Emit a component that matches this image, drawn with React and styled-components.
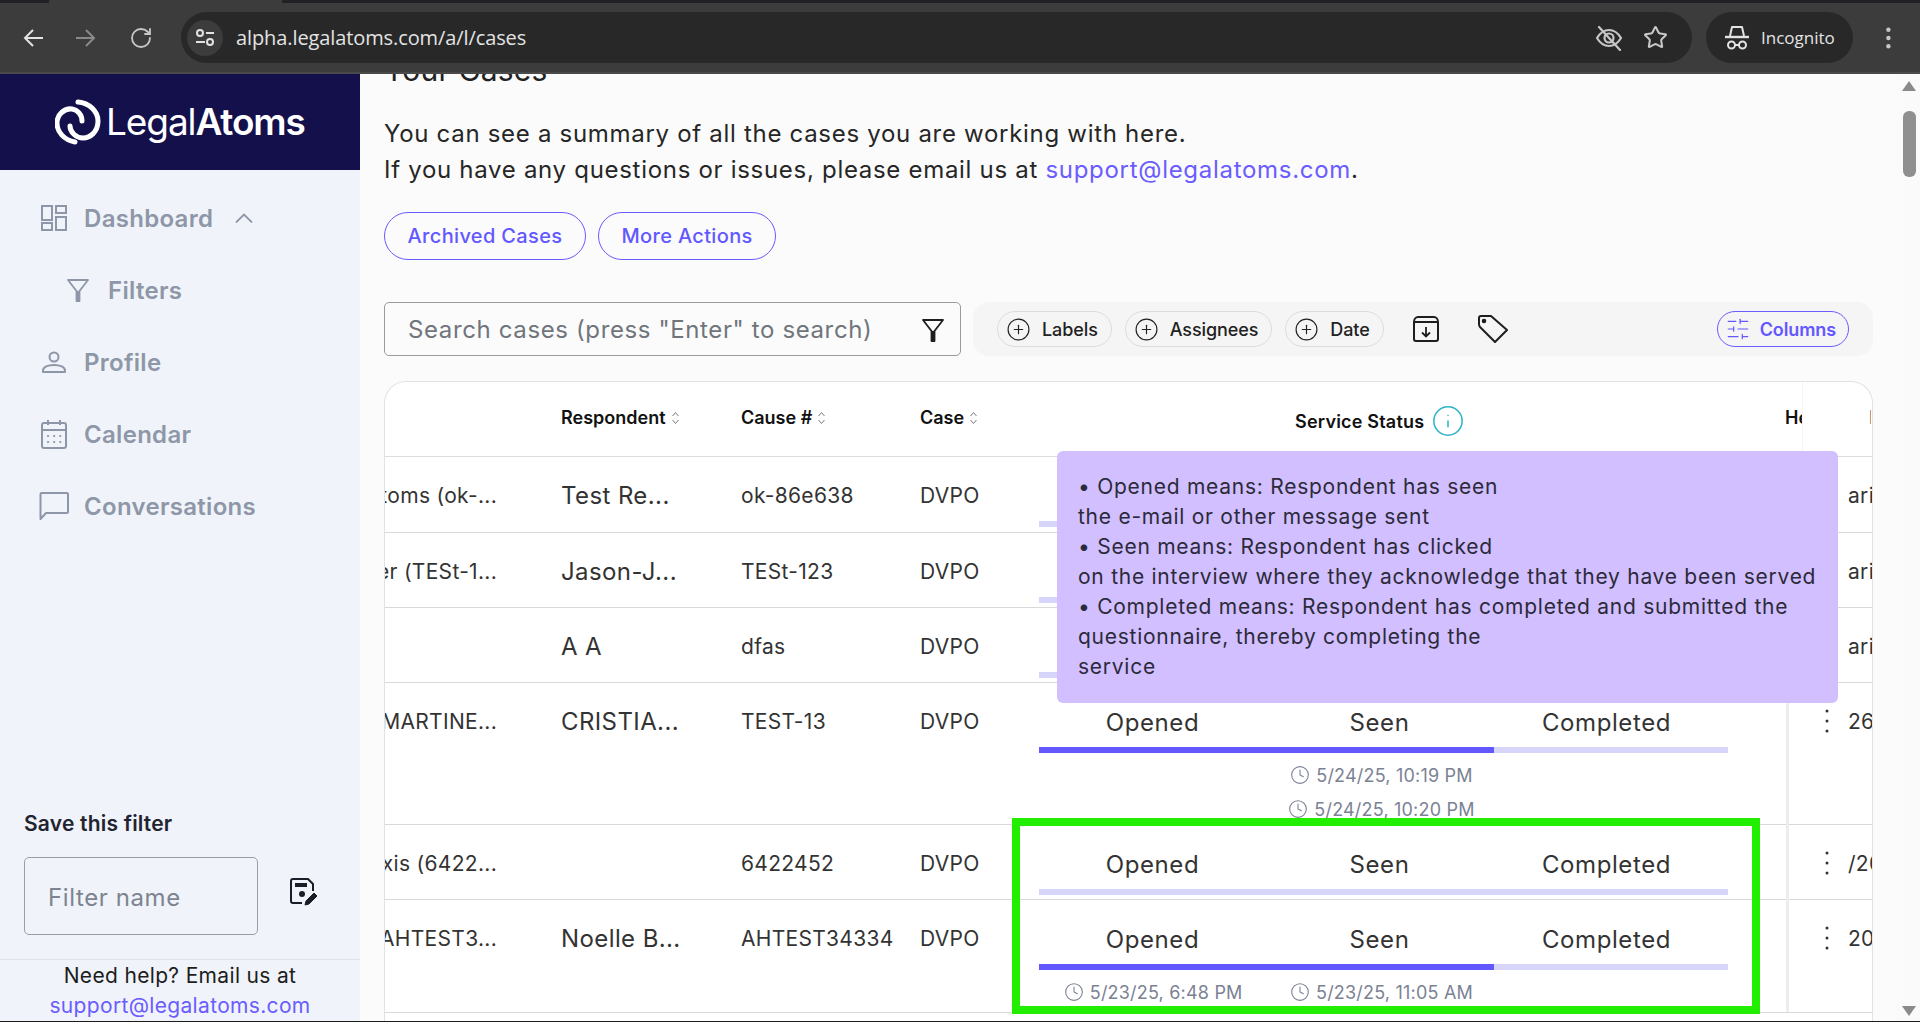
import React from 'react';
import styled, { createGlobalStyle } from 'styled-components';
import { RotateCw, Star, Clock, Info, CirclePlus, SlidersHorizontal } from 'lucide-react';

const GlobalStyle = createGlobalStyle`
  html, body {
    margin: 0;
    padding: 0;
    background: #fbfbfb;
    overflow: hidden;
  }
  * {
    box-sizing: border-box;
  }
`;

const Page = styled.div`
  width: 1920px;
  height: 1022px;
  display: flex;
  flex-direction: column;
  font-family: Inter, 'Liberation Sans', sans-serif;
  color: #2b2b2b;
  border-bottom: 1px solid #1c1c1c;
  overflow: hidden;
`;

/* browser frame */
const TabStrip = styled.div`
  height: 3px;
  background: #202124;
  padding-left: 49px;
  flex-shrink: 0;
`;

const TabEdge = styled.div`
  width: 233px;
  height: 3px;
  background: #3c3c3c;
`;

const Toolbar = styled.div`
  height: 71px;
  flex-shrink: 0;
  background: #3c3c3c;
  border-bottom: 2px solid #4a4a4a;
  display: flex;
  align-items: center;
  padding-left: 23px;
  font-family: 'Open Sans', 'Noto Sans', sans-serif;
  color: #e3e3e3;
`;

const NavIcons = styled.div`
  display: flex;
  align-items: center;
  gap: 33px;
  width: 158px;
  flex-shrink: 0;
`;

const Omnibox = styled.div`
  width: 1511px;
  height: 51px;
  background: #282828;
  border-radius: 26px;
  display: flex;
  align-items: center;
  padding: 0 24px 0 6px;
`;

const SiteButton = styled.div`
  width: 36px;
  height: 36px;
  border-radius: 50%;
  background: #3c3c3c;
  display: flex;
  align-items: center;
  justify-content: center;
  margin-right: 13px;
`;

const UrlText = styled.span`
  font-size: 20px;
  letter-spacing: -0.1px;
  flex: 1;
`;

const OmniIcons = styled.div`
  display: flex;
  align-items: center;
  gap: 20px;
`;

const IncognitoPill = styled.div`
  margin-left: 14px;
  width: 147px;
  height: 51px;
  background: #282828;
  border-radius: 26px;
  display: flex;
  align-items: center;
  gap: 12px;
  padding-left: 19px;
  font-size: 17px;
`;

const MenuDots = styled.div`
  margin-left: 31px;
  display: flex;
`;

/* app */
const Body = styled.div`
  flex: 1;
  min-height: 0;
  display: flex;
`;

const Sidebar = styled.aside`
  width: 360px;
  flex-shrink: 0;
  background: #f0f3f9;
  display: flex;
  flex-direction: column;
`;

const LogoBar = styled.div`
  height: 96px;
  background: #14104c;
  display: flex;
  align-items: center;
  padding-left: 55px;
  gap: 5px;
  color: #fff;
`;

const LogoText = styled.div`
  font-size: 37px;
  font-weight: 400;
  letter-spacing: -1.1px;
  line-height: 1;
  margin-top: -1px;

  b {
    font-weight: 600;
  }
`;

const Nav = styled.nav`
  flex: 1;
  margin-top: 12px;
`;

const NavItem = styled.div`
  height: 72px;
  display: flex;
  align-items: center;
  padding-left: ${(p) => (p.$sub ? '66px' : '41px')};
  gap: ${(p) => (p.$sub ? '18px' : '17px')};
  color: #8e97a8;
  font-size: 24px;
  font-weight: 600;
  letter-spacing: 0.3px;
`;

const BubbleSvg = styled.svg`
  margin: 0 -2px;
`;

const ChevronSvg = styled.svg`
  margin-left: 5px;
`;

const SaveBlock = styled.div`
  padding: 0 24px 24px;
`;

const SaveTitle = styled.div`
  font-size: 21px;
  font-weight: 600;
  letter-spacing: 0.2px;
  line-height: 30px;
  color: #1f2430;
  margin-bottom: 18px;
`;

const SaveRow = styled.div`
  display: flex;
  align-items: center;
  gap: 32px;
`;

const FilterInput = styled.div`
  width: 234px;
  height: 78px;
  border: 1px solid #9a9ea6;
  border-radius: 5px;
  display: flex;
  align-items: center;
  padding: 2px 0 0 23px;
  font-size: 24px;
  color: #7d8490;
  letter-spacing: 0.6px;
`;

const SaveIconWrap = styled.div`
  margin-top: -8px;
  display: flex;
`;

const HelpBlock = styled.div`
  border-top: 1px solid #dfe2e8;
  text-align: center;
  font-size: 21px;
  letter-spacing: 0.33px;
  line-height: 30px;
  color: #1d1d1d;
  padding-top: 1px;
  height: 62px;
`;

const SupportLink = styled.a`
  color: #6a5cff;
  text-decoration: none;
`;

const Main = styled.main`
  flex: 1;
  min-width: 0;
  padding: 0 24px;
  background: #fbfbfb;
  overflow: hidden;
`;

const Heading = styled.h1`
  margin: -24px 0 26px;
  font-size: 30px;
  line-height: 40px;
  font-weight: 400;
  letter-spacing: 0.2px;
  color: #222;
`;

const Intro = styled.p`
  margin: 0 0 24px;
  font-size: 24px;
  line-height: 36px;
  letter-spacing: 0.7px;
  color: #262626;
`;

const ActionRow = styled.div`
  display: flex;
  gap: 12px;
  margin-bottom: 42px;
`;

const PillButton = styled.button`
  height: 48px;
  padding: 0 22.5px;
  border: 1px solid #6a5cff;
  border-radius: 24px;
  background: transparent;
  color: #6358ff;
  font-family: inherit;
  font-size: 20px;
  font-weight: 500;
  letter-spacing: 0.35px;
`;

const SearchRow = styled.div`
  display: flex;
  gap: 12px;
  margin-bottom: 25px;
`;

const SearchBox = styled.div`
  width: 577px;
  height: 54px;
  border: 1px solid #9a9a9a;
  border-radius: 5px;
  display: flex;
  align-items: center;
  justify-content: space-between;
  padding: 1px 15px 0 23px;
  font-size: 24px;
  letter-spacing: 0.62px;
  color: #70757c;
`;

const FilterBar = styled.div`
  flex: 1;
  height: 54px;
  background: #f5f5f5;
  border-radius: 16px;
  display: flex;
  align-items: center;
  padding: 0 24px;
  gap: 13px;
`;

const Chip = styled.div`
  height: 36px;
  border: 1px solid #dcdcdc;
  border-radius: 18px;
  display: flex;
  align-items: center;
  gap: 11px;
  padding: 0 13px 0 8px;
  font-size: 18px;
  font-weight: 500;
  letter-spacing: -0.1px;
  color: #222;
`;

const BarIcon = styled.div`
  display: flex;
  margin-left: ${(p) => p.$left}px;
`;

const ColumnsButton = styled(Chip)`
  margin-left: auto;
  border: 1.5px solid #6a5cff;
  color: #6358ff;
  font-weight: 600;
  gap: 9px;
  padding: 0 12px 0 7px;
`;

const TableCard = styled.section`
  position: relative;
  height: 700px;
  background: #fff;
  border: 1px solid #e2e2e2;
  border-bottom: 0;
  border-radius: 22px 22px 0 0;
  overflow: hidden;
`;

const ROW_GRID = '176px 180px 179px 119px 689px 58px 1fr';

const HeaderRow = styled.div`
  height: 75px;
  display: grid;
  grid-template-columns: ${ROW_GRID};
  border-bottom: 1px solid #dddddd;
`;

const HeadCell = styled.div`
  display: flex;
  align-items: center;
  gap: 5px;
  height: 71px;
  font-size: 18px;
  font-weight: 600;
  color: #111;
`;

const ServiceHead = styled.div`
  display: flex;
  align-items: center;
  padding: 2px 0 0 256px;
  gap: 7px;
  height: 76px;
  font-size: 18px;
  font-weight: 600;
  letter-spacing: 0.2px;
  color: #111;
`;

const PinnedHead = styled.div`
  display: flex;
  align-items: center;
  height: 71px;
  font-size: 18px;
  font-weight: 600;
  color: #111;
  margin-left: -1px;
`;

const ClippedHead = styled.span`
  width: 18px;
  overflow: hidden;
  white-space: nowrap;
  border-right: 1px solid #f4f4f4;
  line-height: 71px;
`;

const ClippedEdge = styled.span`
  width: 2px;
  margin-left: 66px;
  overflow: hidden;
  color: #777;
`;

const Row = styled.div`
  height: ${(p) => p.$height}px;
  display: grid;
  grid-template-columns: ${ROW_GRID};
  border-bottom: 1px solid #d9d9d9;
`;

const Cell = styled.div`
  height: 76px;
  display: flex;
  align-items: center;
  font-size: 21px;
  letter-spacing: 0.3px;
  color: #333;
  white-space: nowrap;
  overflow: hidden;
`;

const NameCell = styled(Cell)`
  width: 112px;
  justify-content: flex-end;
`;

const RespondentCell = styled(Cell)`
  font-size: 24px;
  letter-spacing: 0.4px;
`;

const StatusCell = styled.div`
  padding-top: 22px;
`;

const StatusGrid = styled.div`
  width: 681px;
  display: grid;
  grid-template-columns: repeat(3, 1fr);
  text-align: center;
  font-size: 24px;
  line-height: 36px;
  letter-spacing: 0.6px;
  color: #333;
`;

const ProgressTrack = styled.div`
  width: 689px;
  height: 6px;
  margin-top: 6px;
  background: #d8d5fb;
`;

const ProgressFill = styled.div`
  height: 100%;
  width: ${(p) => p.$fill}%;
  background: #6358ff;
`;

const TimesGrid = styled.div`
  width: 685px;
  display: grid;
  grid-template-columns: repeat(3, 1fr);
  padding-top: 5px;
`;

const TimeStack = styled.div`
  display: flex;
  flex-direction: column;
  align-items: center;
`;

const TimeStamp = styled.div`
  height: 34px;
  display: flex;
  align-items: center;
  gap: 6px;
  font-size: 18px;
  letter-spacing: 0.2px;
  color: #7b8294;
  white-space: nowrap;
`;

const PinnedCell = styled(Cell)`
  border-left: 3px solid #ededed;
  height: 100%;
  align-items: flex-start;
  padding-left: 35px;
`;

const PinnedInner = styled.div`
  height: 76px;
  display: flex;
  align-items: center;
  gap: 18px;
`;

const Tooltip = styled.div`
  position: absolute;
  top: 69px;
  left: 672px;
  width: 781px;
  height: 252px;
  padding: 21px;
  background: #d1bfff;
  border-radius: 6px;
  font-size: 21px;
  line-height: 30px;
  letter-spacing: 0.74px;
  color: #2c2a3a;
  white-space: nowrap;
  z-index: 2;
`;

const HighlightBox = styled.div`
  position: absolute;
  top: 436px;
  left: 627px;
  width: 748px;
  height: 196px;
  border: 8px solid #22ee00;
  z-index: 3;
`;

const Scrollbar = styled.div`
  width: 23px;
  flex-shrink: 0;
  background: #fafafa;
  display: flex;
  flex-direction: column;
  align-items: center;
  padding: 7px 0 5px 1px;
`;

const ScrollArrow = styled.div`
  width: 0;
  height: 0;
  border-left: 7px solid transparent;
  border-right: 7px solid transparent;
  ${(p) => (p.$down ? 'border-top: 10px solid #8a8a8a;' : 'border-bottom: 10px solid #8a8a8a;')}
`;

const ScrollThumb = styled.div`
  width: 13px;
  height: 66px;
  margin-top: 20px;
  margin-bottom: auto;
  border-radius: 6px;
  background: #8f8f8f;
`;

/* hand drawn icons */
const LogoMark = () => (
  <svg width="46" height="46" viewBox="0 0 46 46" fill="none" stroke="#fff" strokeWidth="5" strokeLinecap="round">
    <path d="M20 43C9 41 2 33 2 24C2 15 10 9 17 10C23 11 27 16 27 22" />
    <path d="M23 3C34 4 43 12 43 22C43 33 35 39 28 39C21 39 15 33 15 27" />
  </svg>
);

const ChromeArrow = ({ flip, color }) => (
  <svg width="20" height="18" viewBox="0 0 20 18" fill="none" stroke={color} strokeWidth="2" style={flip ? { transform: 'scaleX(-1)' } : undefined}>
    <path d="M20 9H2M10 1L2 9L10 17" />
  </svg>
);

const Kebab = ({ height = 24, radius = 1.5, color = '#333' }) => (
  <svg width={radius * 4} height={height} viewBox={`0 0 ${radius * 4} ${height}`} fill={color}>
    <circle cx={radius * 2} cy={radius + 0.5} r={radius} />
    <circle cx={radius * 2} cy={height / 2} r={radius} />
    <circle cx={radius * 2} cy={height - radius - 0.5} r={radius} />
  </svg>
);

const DashboardIcon = () => (
  <svg width="26" height="26" viewBox="0 0 26 26" fill="none" stroke="#8e97a8" strokeWidth="2">
    <rect x="1" y="1" width="10" height="14" />
    <rect x="15" y="1" width="10" height="7" />
    <rect x="1" y="18" width="10" height="7" />
    <rect x="15" y="12" width="10" height="13" />
  </svg>
);

const FunnelIcon = ({ color = '#8e97a8', size = 24 }) => (
  <svg width={size} height={size} viewBox="0 0 24 24" fill="none" stroke={color} strokeWidth="1.8">
    <path d="M2 2H22L13.5 13V23H10.5V13Z" strokeLinejoin="round" />
    <path d="M12 13V23" strokeWidth="3" />
  </svg>
);

const PersonIcon = () => (
  <svg width="26" height="26" viewBox="0 0 26 26" fill="none" stroke="#8e97a8" strokeWidth="2">
    <circle cx="13" cy="8" r="4.5" />
    <path d="M2 23V21.5C2 18 7 16 13 16C19 16 24 18 24 21.5V23Z" strokeLinejoin="round" />
  </svg>
);

const CalendarIcon = () => (
  <svg width="26" height="30" viewBox="0 0 26 30" fill="none" stroke="#8e97a8" strokeWidth="2">
    <rect x="1" y="4" width="24" height="25" rx="2" />
    <path d="M1 11H25M7 1V6M19 1V6" />
    <path d="M7 17H20M7 23H20" strokeLinecap="round" strokeWidth="2.2" strokeDasharray="0.1 6" />
  </svg>
);

const BubbleIcon = () => (
  <BubbleSvg width="30" height="28" viewBox="0 0 30 28" fill="none" stroke="#8e97a8" strokeWidth="2">
    <path d="M1.5 27V2C1.5 1.5 2 1 2.5 1H28C28.5 1 29 1.5 29 2V20C29 20.5 28.5 21 28 21H7Z" strokeLinejoin="round" />
  </BubbleSvg>
);

const ChevronUp = () => (
  <ChevronSvg width="18" height="10" viewBox="0 0 18 10" fill="none" stroke="#8e97a8" strokeWidth="1.8">
    <path d="M1 9.5L9 1.5L17 9.5" />
  </ChevronSvg>
);

const SiteTuneIcon = () => (
  <svg width="20" height="20" viewBox="0 0 20 20" fill="none" stroke="#e3e3e3" strokeWidth="2">
    <circle cx="5" cy="5" r="3" />
    <path d="M11 5H19M1 14H10" />
    <circle cx="15" cy="14" r="3" />
  </svg>
);

const EyeOffIcon = () => (
  <svg width="28" height="26" viewBox="0 0 28 26" fill="none" stroke="#c7c7c7" strokeWidth="2.2">
    <path d="M2 13C5 8 9 5 14 5C19 5 23 8 26 13C23 18 19 21 14 21C9 21 5 18 2 13Z" />
    <circle cx="14" cy="13" r="4.5" />
    <path d="M4 2L25 25" strokeLinecap="round" />
  </svg>
);

const IncognitoIcon = () => (
  <svg width="24" height="25" viewBox="0 0 24 25" fill="none" stroke="#e3e3e3" strokeWidth="2">
    <path d="M5 11L7 2H17L19 11" strokeLinejoin="round" />
    <path d="M0 12H24" strokeWidth="2.4" />
    <circle cx="6.5" cy="20" r="3.5" />
    <circle cx="17.5" cy="20" r="3.5" />
    <path d="M10 20H14" />
  </svg>
);

const ArchiveDownIcon = () => (
  <svg width="26" height="26" viewBox="0 0 26 26" fill="none" stroke="#1e1e1e" strokeWidth="2">
    <path d="M1 6C1 3 3 1 5 1H21C23 1 25 3 25 6V23C25 24 24 25 23 25H3C2 25 1 24 1 23Z" strokeLinejoin="round" />
    <path d="M1 6H25" />
    <path d="M13 11V20M9 16.5L13 20.5L17 16.5" strokeWidth="1.8" />
  </svg>
);

const TagIcon = () => (
  <svg width="30" height="28" viewBox="0 0 30 28" fill="none" stroke="#1e1e1e" strokeWidth="2">
    <path d="M1 3C1 2 2 1 3 1H13L29 15L17 27L2 12C1 11 1 10 1 9Z" strokeLinejoin="round" />
    <circle cx="6" cy="6" r="1.3" fill="#1e1e1e" />
  </svg>
);

const SavePenIcon = () => (
  <svg width="28" height="29" viewBox="0 0 28 29" fill="none" stroke="#1c1c28" strokeWidth="2">
    <path d="M12 25H3C2 25 1 24 1 23V3C1 2 2 1 3 1H18L23 6V13" strokeLinejoin="round" />
    <rect x="5" y="5" width="12" height="4" fill="#1c1c28" stroke="none" />
    <circle cx="12" cy="16" r="3" fill="#1c1c28" stroke="none" />
    <path d="M15 27L16 23L24 15L27 18L19 26Z" fill="#1c1c28" strokeWidth="1" strokeLinejoin="round" />
  </svg>
);

const SortIcon = () => (
  <svg width="9" height="14" viewBox="0 0 9 14" fill="none" stroke="#7a7a7a" strokeWidth="1">
    <path d="M1.5 5L4.5 1.5L7.5 5M1.5 9L4.5 12.5L7.5 9" />
  </svg>
);

const TOOLTIP_LINES = [
  '• Opened means: Respondent has seen',
  'the e-mail or other message sent',
  '• Seen means: Respondent has clicked',
  'on the interview where they acknowledge that they have been served',
  '• Completed means: Respondent has completed and submitted the',
  'questionnaire, thereby completing the',
  'service',
];

const ROWS = [
  { height: 76, name: 'Atoms (ok-...', respondent: 'Test Re...', cause: 'ok-86e638', tail: 'ari', fill: 0 },
  { height: 75, name: 'er (TESt-1...', respondent: 'Jason-J...', cause: 'TESt-123', tail: 'ari', fill: 0 },
  { height: 75, name: '', respondent: 'A A', cause: 'dfas', tail: 'ari', fill: 0 },
  {
    height: 142,
    name: 'MARTINE...',
    respondent: 'CRISTIA...',
    cause: 'TEST-13',
    tail: '26',
    fill: 66,
    times: [[], ['5/24/25, 10:19 PM', '5/24/25, 10:20 PM'], []],
  },
  { height: 75, name: 'xis (6422...', respondent: '', cause: '6422452', tail: '/20', fill: 0 },
  {
    height: 113,
    name: 'AHTEST3...',
    respondent: 'Noelle B...',
    cause: 'AHTEST34334',
    tail: '20',
    fill: 66,
    times: [['5/23/25, 6:48 PM'], ['5/23/25, 11:05 AM'], []],
  },
];

const ServiceStatus = ({ fill, times }) => (
  <StatusCell>
    <StatusGrid>
      <span>Opened</span>
      <span>Seen</span>
      <span>Completed</span>
    </StatusGrid>
    <ProgressTrack>
      <ProgressFill $fill={fill} />
    </ProgressTrack>
    {times && (
      <TimesGrid>
        {times.map((list, i) => (
          <TimeStack key={i}>
            {list.map((t) => (
              <TimeStamp key={t}>
                <Clock size={20} color="#7b8294" strokeWidth={1.3} />
                {t}
              </TimeStamp>
            ))}
          </TimeStack>
        ))}
      </TimesGrid>
    )}
  </StatusCell>
);

const App = () => {
  return (
    <Page>
      <GlobalStyle />
      <TabStrip>
        <TabEdge />
      </TabStrip>
      <Toolbar>
        <NavIcons>
          <ChromeArrow color="#e3e3e3" />
          <ChromeArrow flip color="#8a8a8a" />
          <RotateCw size={24} color="#c7c7c7" strokeWidth={1.8} />
        </NavIcons>
        <Omnibox>
          <SiteButton>
            <SiteTuneIcon />
          </SiteButton>
          <UrlText>alpha.legalatoms.com/a/l/cases</UrlText>
          <OmniIcons>
            <EyeOffIcon />
            <Star size={25} color="#c7c7c7" strokeWidth={2} />
          </OmniIcons>
        </Omnibox>
        <IncognitoPill>
          <IncognitoIcon />
          Incognito
        </IncognitoPill>
        <MenuDots>
          <Kebab height={22} radius={2.2} color="#c7c7c7" />
        </MenuDots>
      </Toolbar>
      <Body>
        <Sidebar>
          <LogoBar>
            <LogoMark />
            <LogoText>
              Legal<b>Atoms</b>
            </LogoText>
          </LogoBar>
          <Nav>
            <NavItem>
              <DashboardIcon />
              Dashboard
              <ChevronUp />
            </NavItem>
            <NavItem $sub>
              <FunnelIcon />
              Filters
            </NavItem>
            <NavItem>
              <PersonIcon />
              Profile
            </NavItem>
            <NavItem>
              <CalendarIcon />
              Calendar
            </NavItem>
            <NavItem>
              <BubbleIcon />
              Conversations
            </NavItem>
          </Nav>
          <SaveBlock>
            <SaveTitle>Save this filter</SaveTitle>
            <SaveRow>
              <FilterInput>Filter name</FilterInput>
              <SaveIconWrap>
                <SavePenIcon />
              </SaveIconWrap>
            </SaveRow>
          </SaveBlock>
          <HelpBlock>
            Need help? Email us at
            <br />
            <SupportLink href="#">support@legalatoms.com</SupportLink>
          </HelpBlock>
        </Sidebar>
        <Main>
          <Heading>Your Cases</Heading>
          <Intro>
            You can see a summary of all the cases you are working with here.
            <br />
            If you have any questions or issues, please email us at <SupportLink href="#">support@legalatoms.com</SupportLink>.
          </Intro>
          <ActionRow>
            <PillButton>Archived Cases</PillButton>
            <PillButton>More Actions</PillButton>
          </ActionRow>
          <SearchRow>
            <SearchBox>
              Search cases (press "Enter" to search)
              <FunnelIcon color="#1e1e1e" size={24} />
            </SearchBox>
            <FilterBar>
              <Chip>
                <CirclePlus size={25} color="#222" strokeWidth={1.1} />
                Labels
              </Chip>
              <Chip>
                <CirclePlus size={25} color="#222" strokeWidth={1.1} />
                Assignees
              </Chip>
              <Chip>
                <CirclePlus size={25} color="#222" strokeWidth={1.1} />
                Date
              </Chip>
              <BarIcon $left={16}>
                <ArchiveDownIcon />
              </BarIcon>
              <BarIcon $left={26}>
                <TagIcon />
              </BarIcon>
              <ColumnsButton>
                <SlidersHorizontal size={26} color="#6358ff" strokeWidth={1.1} />
                Columns
              </ColumnsButton>
            </FilterBar>
          </SearchRow>
          <TableCard>
            <HeaderRow>
              <span />
              <HeadCell>
                Respondent <SortIcon />
              </HeadCell>
              <HeadCell>
                Cause # <SortIcon />
              </HeadCell>
              <HeadCell>
                Case <SortIcon />
              </HeadCell>
              <ServiceHead>
                Service Status
                <Info size={34} color="#2eb3c6" strokeWidth={1.1} />
              </ServiceHead>
              <span />
              <PinnedHead>
                <ClippedHead>Health</ClippedHead>
                <ClippedEdge>D</ClippedEdge>
              </PinnedHead>
            </HeaderRow>
            {ROWS.map((row) => (
              <Row key={row.cause} $height={row.height}>
                <NameCell>{row.name}</NameCell>
                <RespondentCell>{row.respondent}</RespondentCell>
                <Cell>{row.cause}</Cell>
                <Cell>DVPO</Cell>
                <ServiceStatus fill={row.fill} times={row.times} />
                <span />
                <PinnedCell>
                  <PinnedInner>
                    <Kebab />
                    {row.tail}
                  </PinnedInner>
                </PinnedCell>
              </Row>
            ))}
            <Tooltip>
              {TOOLTIP_LINES.map((line) => (
                <div key={line}>{line}</div>
              ))}
            </Tooltip>
            <HighlightBox />
          </TableCard>
        </Main>
        <Scrollbar>
          <ScrollArrow />
          <ScrollThumb />
          <ScrollArrow $down />
        </Scrollbar>
      </Body>
    </Page>
  );
};

export default App;
